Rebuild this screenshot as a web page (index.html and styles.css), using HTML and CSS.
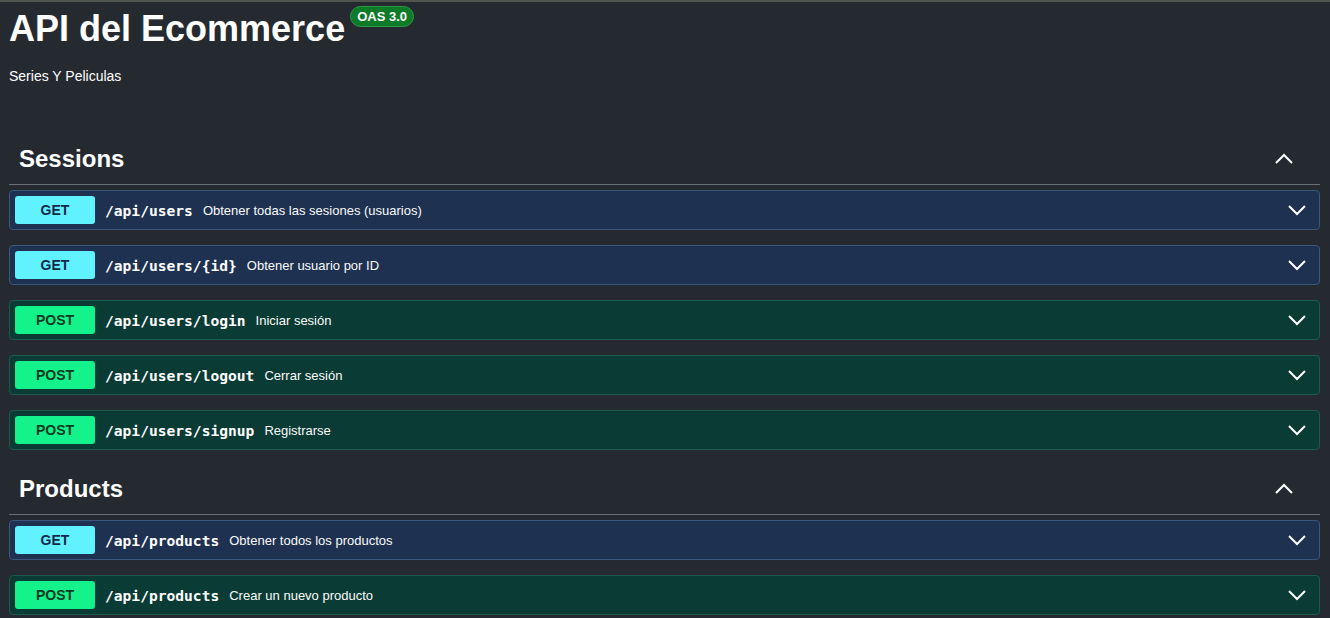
FILE: index.html
```html
<!DOCTYPE html>
<html lang="es">

<head>
  <meta charset="UTF-8">
  <meta name="viewport" content="width=device-width, initial-scale=1.0">
  <title>API del Ecommerce</title>
  <link rel="stylesheet" href="styles.css">
</head>

<body>
  <div class="wrapper">
    <div class="info">
      <h2 class="title">API del Ecommerce <span class="version">OAS 3.0</span></h2>
      <p class="description">Series Y Peliculas</p>
    </div>

    <div class="tag-section">
      <h3 class="tag-header">
        <span>Sessions</span>
        <svg class="arrow-up" width="20" height="20" viewBox="0 0 20 20"><path d="M2 14 L10 6 L18 14" /></svg>
      </h3>
      <div class="ops">
        <div class="op op-get">
          <span class="method">GET</span>
          <span class="path">/api/users</span>
          <span class="summary">Obtener todas las sesiones (usuarios)</span>
          <svg class="arrow" width="20" height="20" viewBox="0 0 20 20"><path d="M2 6 L10 14 L18 6" /></svg>
        </div>
        <div class="op op-get">
          <span class="method">GET</span>
          <span class="path">/api/users/{id}</span>
          <span class="summary">Obtener usuario por ID</span>
          <svg class="arrow" width="20" height="20" viewBox="0 0 20 20"><path d="M2 6 L10 14 L18 6" /></svg>
        </div>
        <div class="op op-post">
          <span class="method">POST</span>
          <span class="path">/api/users/login</span>
          <span class="summary">Iniciar sesión</span>
          <svg class="arrow" width="20" height="20" viewBox="0 0 20 20"><path d="M2 6 L10 14 L18 6" /></svg>
        </div>
        <div class="op op-post">
          <span class="method">POST</span>
          <span class="path">/api/users/logout</span>
          <span class="summary">Cerrar sesión</span>
          <svg class="arrow" width="20" height="20" viewBox="0 0 20 20"><path d="M2 6 L10 14 L18 6" /></svg>
        </div>
        <div class="op op-post">
          <span class="method">POST</span>
          <span class="path">/api/users/signup</span>
          <span class="summary">Registrarse</span>
          <svg class="arrow" width="20" height="20" viewBox="0 0 20 20"><path d="M2 6 L10 14 L18 6" /></svg>
        </div>
      </div>
    </div>

    <div class="tag-section">
      <h3 class="tag-header">
        <span>Products</span>
        <svg class="arrow-up" width="20" height="20" viewBox="0 0 20 20"><path d="M2 14 L10 6 L18 14" /></svg>
      </h3>
      <div class="ops">
        <div class="op op-get">
          <span class="method">GET</span>
          <span class="path">/api/products</span>
          <span class="summary">Obtener todos los productos</span>
          <svg class="arrow" width="20" height="20" viewBox="0 0 20 20"><path d="M2 6 L10 14 L18 6" /></svg>
        </div>
        <div class="op op-post">
          <span class="method">POST</span>
          <span class="path">/api/products</span>
          <span class="summary">Crear un nuevo producto</span>
          <svg class="arrow" width="20" height="20" viewBox="0 0 20 20"><path d="M2 6 L10 14 L18 6" /></svg>
        </div>
      </div>
    </div>
  </div>
</body>

</html>
```

FILE: styles.css
```css
* {
  box-sizing: border-box;
}

body {
  margin: 0;
  background-color: #252a31;
  border-top: 2px solid #4f544f;
  color: #fff;
  font-family: "Liberation Sans", Arial, sans-serif;
  overflow: hidden;
}

.wrapper {
  padding: 0 10px 0 9px;
}

/* info */
.info {
  padding-top: 5px;
  margin-bottom: 48px;
}

.title {
  display: flex;
  align-items: flex-start;
  margin: 0;
  font-size: 36px;
  line-height: 43px;
  font-weight: bold;
}

.version {
  margin: -1px 0 0 5px;
  padding: 2px 6px;
  height: 21px;
  font-size: 13px;
  line-height: 16px;
  font-weight: bold;
  background-color: #0c7a27;
  border: 1px solid #2c9a45;
  border-radius: 11px;
}

.description {
  margin: 18px 0 0;
  font-size: 14px;
  line-height: 16px;
}

/* tags */
.tag-section {
  margin-bottom: 12px;
}

.tag-header {
  display: flex;
  align-items: center;
  justify-content: space-between;
  margin: 0;
  padding: 11px 26px 9px 10px;
  height: 53px;
  font-size: 24px;
  line-height: 32px;
  border-bottom: 1px solid #6b6f73;
}

.arrow-up path,
.arrow path {
  fill: none;
  stroke: #fff;
  stroke-width: 2;
}

.ops {
  display: flex;
  flex-direction: column;
  gap: 15px;
  margin-top: 5px;
}

.op {
  display: flex;
  align-items: center;
  height: 40px;
  padding: 0 12px 0 5px;
  border: 1px solid;
  border-radius: 4px;
}

.op-get {
  background-color: #1e3150;
  border-color: #3a577c;
}

.op-post {
  background-color: #0b3b35;
  border-color: #1d5a4b;
}

.method {
  width: 80px;
  height: 28px;
  border-radius: 3px;
  text-align: center;
  font-size: 14px;
  line-height: 28px;
  font-weight: bold;
}

.op-get .method {
  background-color: #61f2ff;
  color: #15284a;
}

.op-post .method {
  background-color: #13f28b;
  color: #073a22;
}

.path {
  margin-left: 10px;
  font-family: "DejaVu Sans Mono", "Liberation Mono", monospace;
  font-size: 14.6px;
  font-weight: bold;
}

.summary {
  flex: 1;
  margin-left: 10px;
  font-size: 13px;
  color: #fafafa;
}
```
